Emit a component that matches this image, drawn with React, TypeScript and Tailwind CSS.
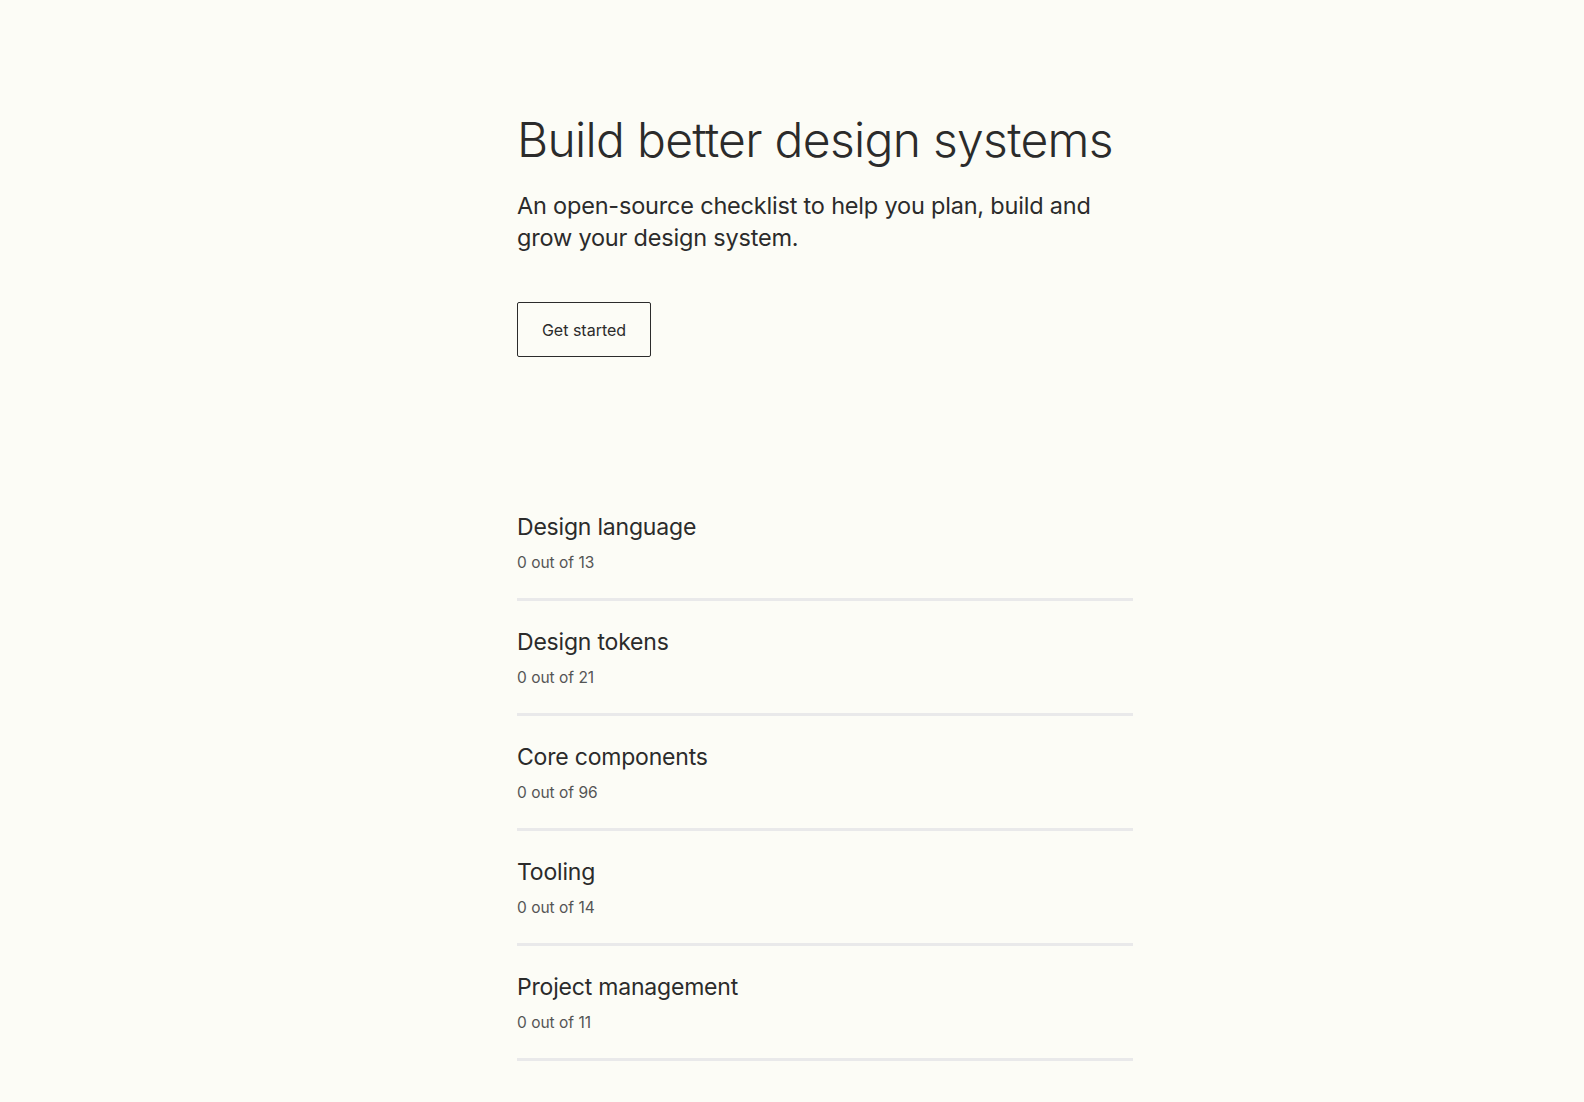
const sections = [
  { title: 'Design language', done: 0, total: 13 },
  { title: 'Design tokens', done: 0, total: 21 },
  { title: 'Core components', done: 0, total: 96 },
  { title: 'Tooling', done: 0, total: 14 },
  { title: 'Project management', done: 0, total: 11 },
];

export default function App() {
  return (
    <div className="min-h-[1102px] bg-[#fcfcf6] text-[#2b2b2b] font-['Inter',sans-serif]">
      <main className="ml-[517px] w-[616px] pt-[112px]">
        {/* hero */}
        <section>
          <h1 className="text-[48px] leading-[56px] font-light tracking-[-0.7px]">
            Build better design systems
          </h1>
          <p className="mt-[22px] text-[23.5px] leading-[32px] tracking-[-0.2px] pr-[20px]">
            An open-source checklist to help you plan, build and grow your design system.
          </p>
          <a
            href="#"
            className="mt-[48px] inline-flex h-[55px] w-[134px] items-center justify-center rounded-[2px] border border-[#2b2b2b] text-[16px]"
          >
            Get started
          </a>
        </section>

        {/* checklist sections */}
        <ul className="mt-[154px]">
          {sections.map((s) => (
            <li key={s.title} className="border-b-[3px] border-[#e9e9ea] pt-[25px] pb-[23px] first:pt-0">
              <h2 className="text-[23px] leading-[32px] tracking-[-0.2px]">{s.title}</h2>
              <p className="mt-[8px] text-[15.5px] leading-[24px] text-[#555555]">
                {s.done} out of {s.total}
              </p>
            </li>
          ))}
        </ul>
      </main>
    </div>
  );
}
